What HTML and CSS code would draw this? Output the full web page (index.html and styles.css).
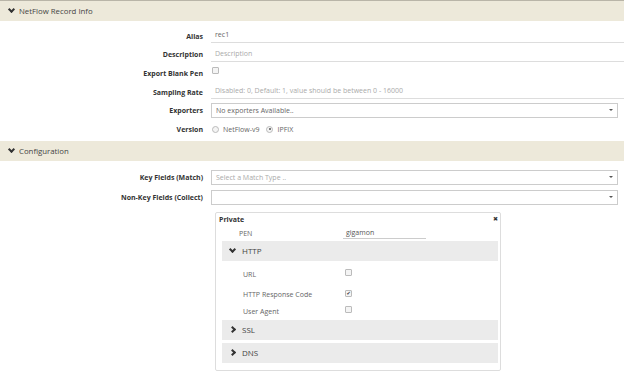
FILE: index.html
```html
<!DOCTYPE html>
<html lang="en">

<head>
    <meta charset="UTF-8">
    <title>NetFlow Record</title>
    <link rel="stylesheet" href="styles.css">
</head>

<body>
    <div class="section-head">
        <span class="chev down"></span>NetFlow Record Info
    </div>
    <div class="form">
        <div class="row">
            <label>Alias</label>
            <div class="line">rec1</div>
        </div>
        <div class="row">
            <label>Description</label>
            <div class="line ph">Description</div>
        </div>
        <div class="row">
            <label>Export Blank Pen</label>
            <span class="check"></span>
        </div>
        <div class="row">
            <label>Sampling Rate</label>
            <div class="line ph">Disabled: 0, Default: 1, value should be between 0 - 16000</div>
        </div>
        <div class="row">
            <label>Exporters</label>
            <div class="select">No exporters Available..<span class="caret"></span></div>
        </div>
        <div class="row">
            <label>Version</label>
            <span class="radio"></span><span class="opt">NetFlow-v9</span>
            <span class="radio on"></span><span class="opt">IPFIX</span>
        </div>
    </div>

    <div class="section-head">
        <span class="chev down"></span>Configuration
    </div>
    <div class="form conf">
        <div class="row">
            <label>Key Fields (Match)</label>
            <div class="select ph">Select a Match Type ..<span class="caret"></span></div>
        </div>
        <div class="row">
            <label>Non-Key Fields (Collect)</label>
            <div class="select"><span class="caret"></span></div>
        </div>
    </div>

    <div class="panel">
        <div class="panel-title">Private <span class="close">&#10006;</span></div>
        <div class="pen">
            <span class="pen-label">PEN</span>
            <div class="pen-input">gigamon</div>
        </div>
        <div class="group"><span class="chev down"></span>HTTP</div>
        <div class="field url">
            <span class="field-name">URL</span><span class="check"></span>
        </div>
        <div class="field code">
            <span class="field-name">HTTP Response Code</span><span class="check checked">&#10004;</span>
        </div>
        <div class="field agent">
            <span class="field-name">User Agent</span><span class="check"></span>
        </div>
        <div class="group"><span class="chev right"></span>SSL</div>
        <div class="group"><span class="chev right"></span>DNS</div>
    </div>
</body>

</html>
```

FILE: styles.css
```css
body {
    margin: 0;
    font-family: "Open Sans", "DejaVu Sans", sans-serif;
    font-size: 7px;
    color: #555;
    background: #fff;
    border-top: 1px solid #b9b5a8;
}

.section-head {
    height: 20px;
    line-height: 20px;
    background-color: #ede9da;
    padding-left: 9px;
    font-size: 7.8px;
    color: #444;
}

.chev {
    display: inline-block;
    width: 3px;
    height: 3px;
    border-right: 2px solid #333;
    border-bottom: 2px solid #333;
    margin-right: 5px;
    vertical-align: 1px;
}
.chev.down {
    transform: rotate(45deg);
    vertical-align: 2px;
}
.chev.right {
    transform: rotate(-45deg);
}

.form {
    padding: 6px 6px 2px 0;
}

.row {
    display: flex;
    align-items: center;
    height: 18.6px;
}

.row label {
    width: 203px;
    text-align: right;
    font-weight: bold;
    color: #333;
    margin-right: 8px;
    flex-shrink: 0;
}

.line {
    flex: 1;
    height: 13px;
    line-height: 12px;
    padding-left: 4px;
    border-bottom: 1px solid #ddd;
    margin-right: -6px;
    color: #666;
}
.ph {
    color: #aaa;
}

.check {
    display: inline-block;
    width: 5px;
    height: 5px;
    border: 1px solid #bbb;
    border-radius: 1px;
    background: #f4f4f4;
    margin-left: 1px;
    margin-top: -5px;
    font-size: 5px;
    line-height: 5px;
    text-align: center;
    color: #333;
}

.select {
    position: relative;
    flex: 1;
    height: 13px;
    line-height: 13px;
    padding-left: 4px;
    border: 1px solid #ccc;
    color: #666;
}
.select.ph {
    color: #aaa;
}
.caret {
    position: absolute;
    right: 4px;
    top: 5px;
    width: 0;
    height: 0;
    border-left: 2.5px solid transparent;
    border-right: 2.5px solid transparent;
    border-top: 2.5px solid #555;
}

.radio {
    display: inline-block;
    width: 5px;
    height: 5px;
    border: 1px solid #bbb;
    border-radius: 50%;
    background: #f4f4f4;
    margin-left: 1px;
    position: relative;
}
.radio.on::after {
    content: "";
    position: absolute;
    left: 1.5px;
    top: 1.5px;
    width: 2px;
    height: 2px;
    border-radius: 50%;
    background: #555;
}
.opt {
    margin: 0 6px 0 4px;
    color: #666;
}

.conf {
    padding-top: 7px;
    padding-bottom: 4px;
}
.conf .row {
    height: 20px;
}

.panel {
    margin-left: 215px;
    width: 276px;
    height: 155px;
    padding: 2px 2px 0 6px;
    border: 1px solid #ddd;
    border-radius: 2px;
}

.panel-title {
    position: relative;
    font-weight: bold;
    color: #333;
    height: 9px;
    line-height: 9px;
    margin-left: -3px;
}
.close {
    position: absolute;
    right: 0;
    top: 0;
    font-size: 6px;
}

.pen {
    display: flex;
    align-items: center;
    height: 14px;
    padding-top: 3px;
}
.pen-label {
    width: 104px;
    padding-left: 17px;
    color: #666;
}
.pen-input {
    width: 80px;
    height: 9px;
    line-height: 8px;
    padding-left: 3px;
    border-bottom: 1px solid #ccc;
    color: #555;
}

.group {
    background: #ebebeb;
    height: 20px;
    line-height: 20px;
    padding-left: 8px;
    font-size: 8px;
    color: #444;
    margin-bottom: 3px;
}
.group .chev {
    margin-right: 7px;
}

.field {
    display: flex;
    align-items: center;
    padding-left: 21px;
    color: #666;
}
.field.url {
    height: 21px;
}
.field.code {
    height: 20px;
}
.field.agent {
    height: 13px;
    margin-bottom: 2px;
}
.field-name {
    width: 101px;
}
.field .check {
    margin-top: -3px;
}
```
